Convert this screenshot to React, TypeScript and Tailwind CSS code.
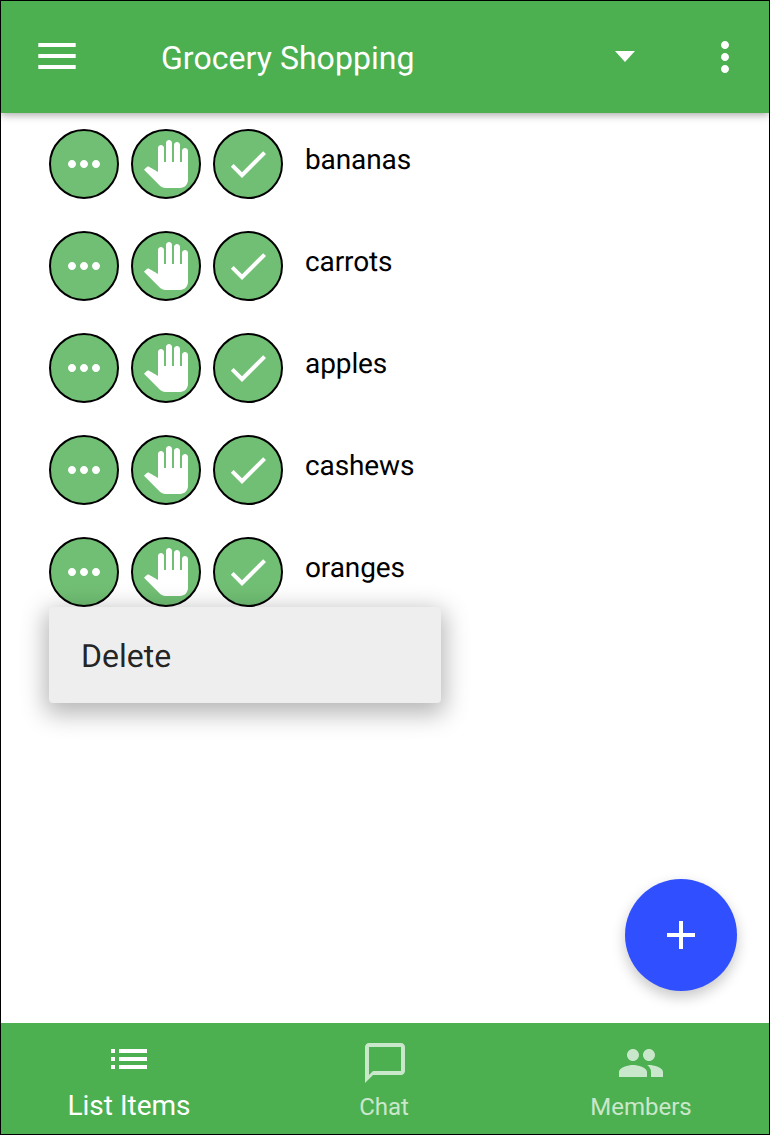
import type { ReactNode } from 'react';

const items = ['bananas', 'carrots', 'apples', 'cashews', 'oranges'];

const paths = {
  moreHoriz:
    'M6 10c-1.1 0-2 .9-2 2s.9 2 2 2 2-.9 2-2-.9-2-2-2zm12 0c-1.1 0-2 .9-2 2s.9 2 2 2 2-.9 2-2-.9-2-2-2zm-6 0c-1.1 0-2 .9-2 2s.9 2 2 2 2-.9 2-2-.9-2-2-2z',
  moreVert:
    'M12 8c1.1 0 2-.9 2-2s-.9-2-2-2-2 .9-2 2 .9 2 2 2zm0 2c-1.1 0-2 .9-2 2s.9 2 2 2 2-.9 2-2-.9-2-2-2zm0 6c-1.1 0-2 .9-2 2s.9 2 2 2 2-.9 2-2-.9-2-2-2z',
  dropDown: 'M7 9.5h10L12 15z',
  hand: 'M23 5.5V20c0 2.2-1.8 4-4 4h-7.3c-1.08 0-2.1-.43-2.85-1.19L1 14.83s1.26-1.23 1.3-1.25c.22-.19.49-.29.79-.29.22 0 .42.06.6.16.04.01 4.31 2.46 4.31 2.46V4c0-.83.67-1.5 1.5-1.5S11 3.17 11 4v7h1V1.5c0-.83.67-1.5 1.5-1.5S15 .67 15 1.5V11h1V2.5c0-.83.67-1.5 1.5-1.5s1.5.67 1.5 1.5V11h1V5.5c0-.83.67-1.5 1.5-1.5s1.5.67 1.5 1.5z',
  check: 'M9 16.17L4.83 12l-1.42 1.41L9 19 21 7l-1.41-1.41z',
  add: 'M19 13h-6v6h-2v-6H5v-2h6V5h2v6h6v2z',
  list: 'M3 13h2v-2H3v2zm0 4h2v-2H3v2zm0-8h2V7H3v2zm4 4h14v-2H7v2zm0 4h14v-2H7v2zM7 7v2h14V7H7z',
  chat: 'M20 2H4c-1.1 0-2 .9-2 2v18l4-4h14c1.1 0 2-.9 2-2V4c0-1.1-.9-2-2-2zm0 14H6l-2 2V4h16v12z',
  people:
    'M16 11c1.66 0 2.99-1.34 2.99-3S17.66 5 16 5c-1.66 0-3 1.34-3 3s1.34 3 3 3zm-8 0c1.66 0 2.99-1.34 2.99-3S9.66 5 8 5C6.34 5 5 6.34 5 8s1.34 3 3 3zm0 2c-2.33 0-7 1.17-7 3.5V19h14v-2.5c0-2.33-4.67-3.5-7-3.5zm8 0c-.29 0-.62.02-.97.05 1.16.84 1.97 1.97 1.97 3.45V19h6v-2.5c0-2.33-4.67-3.5-7-3.5z',
};

function Icon({ name }: { name: keyof typeof paths }) {
  return (
    <svg viewBox="0 0 24 24" className="size-12 shrink-0 fill-current" aria-hidden="true">
      <path d={paths[name]} />
    </svg>
  );
}

function RoundButton({ label, children }: { label: string; children: ReactNode }) {
  return (
    <button
      aria-label={label}
      className="flex size-[70px] shrink-0 items-center justify-center rounded-full border-2 border-black bg-[#71bf74] text-white"
    >
      {children}
    </button>
  );
}

function Header() {
  return (
    <header className="z-10 flex h-28 shrink-0 items-center bg-[#4caf50] pr-5 pl-[37px] text-white shadow-[0_2px_8px_rgba(0,0,0,0.35)]">
      <button aria-label="Menu" className="pb-0.5">
        <svg viewBox="0 0 38 26" className="h-[26px] w-[38px] fill-current" aria-hidden="true">
          <path d="M.3 0h37.4v4H.3zM.3 11h37.4v4H.3zM.3 22h37.4v4H.3z" />
        </svg>
      </button>
      <h1 className="ml-[85px] grow pt-0.5 text-[32px] leading-10 tracking-[0.05px]">Grocery Shopping</h1>
      <button aria-label="Choose list" className="mr-[52px] pb-0.5">
        <Icon name="dropDown" />
      </button>
      <button aria-label="More options">
        <Icon name="moreVert" />
      </button>
    </header>
  );
}

function ItemRow({ name }: { name: string }) {
  return (
    <li className="flex gap-3">
      <RoundButton label="Item menu">
        <Icon name="moreHoriz" />
      </RoundButton>
      <RoundButton label="Claim">
        <Icon name="hand" />
      </RoundButton>
      <RoundButton label="Done">
        <Icon name="check" />
      </RoundButton>
      <span className="ml-2.5 pt-[15px] text-[28px] leading-8 tracking-[-0.1px]">{name}</span>
    </li>
  );
}

export default function App() {
  return (
    <div className="relative flex h-[1135px] w-[770px] flex-col border border-black bg-white font-[Roboto,sans-serif] text-black [text-rendering:geometricPrecision]">
      <Header />
      <main className="relative grow pt-4 pl-12">
        <ul className="flex flex-col gap-8">
          {items.map((name) => (
            <ItemRow key={name} name={name} />
          ))}
        </ul>
        <div className="absolute top-[494px] left-12 flex h-24 w-[392px] items-center rounded bg-[#eee] px-8 pt-0.5 text-[32px] text-black/87 shadow-[0_7px_24px_4px_rgba(0,0,0,0.29)]">
          Delete
        </div>
        <button
          aria-label="Add item"
          className="absolute right-8 bottom-8 flex size-28 items-center justify-center rounded-full bg-[#304ffe] text-white shadow-[0_6px_14px_rgba(0,0,0,0.22)]"
        >
          <Icon name="add" />
        </button>
      </main>
      <nav className="grid h-[111px] shrink-0 grid-cols-3 bg-[#4caf50] text-white">
        <button className="flex flex-col items-center pt-3">
          <Icon name="list" />
          <span className="mt-[7px] text-[28px] leading-8">List Items</span>
        </button>
        <button className="flex flex-col items-center pt-4 opacity-70">
          <Icon name="chat" />
          <span className="mt-1 mr-0.5 text-2xl leading-8">Chat</span>
        </button>
        <button className="flex flex-col items-center pt-4 opacity-70">
          <Icon name="people" />
          <span className="mt-1 text-2xl leading-8">Members</span>
        </button>
      </nav>
    </div>
  );
}
